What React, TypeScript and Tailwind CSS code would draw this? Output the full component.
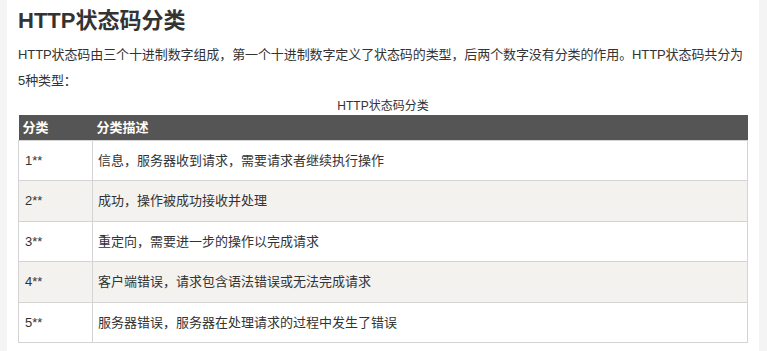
import React from 'react';

const rows = [
  { code: '1**', desc: '信息，服务器收到请求，需要请求者继续执行操作' },
  { code: '2**', desc: '成功，操作被成功接收并处理' },
  { code: '3**', desc: '重定向，需要进一步的操作以完成请求' },
  { code: '4**', desc: '客户端错误，请求包含语法错误或无法完成请求' },
  { code: '5**', desc: '服务器错误，服务器在处理请求的过程中发生了错误' },
];

const App: React.FC = () => {
  return (
    <div
      className="min-h-[351px] bg-[#f4f4f4] text-[#333]"
      style={{ fontFamily: "'Liberation Sans', 'Noto Sans CJK SC', sans-serif" }}
    >
      <div className="ml-[7px] w-[752px] min-h-[351px] bg-white px-[11px] pt-[6px]">
        <h1 className="text-[22px] font-bold leading-[30px] text-[#333]">HTTP状态码分类</h1>

        <p className="mt-[6px] text-[13px] leading-[26px] tracking-[-0.1px]">
          HTTP状态码由三个十进制数字组成，第一个十进制数字定义了状态码的类型，后两个数字没有分类的作用。HTTP状态码共分为
          <br />
          5种类型：
        </p>

        <table className="w-[730px] border-collapse text-[13px]">
          <caption className="pt-[4px] text-[12px] leading-[17px] text-[#333]">HTTP状态码分类</caption>
          <thead>
            <tr className="h-[25px] bg-[#555555] text-white">
              <th className="w-[74px] px-[4px] text-left font-bold">分类</th>
              <th className="px-[4px] text-left font-bold">分类描述</th>
            </tr>
          </thead>
          <tbody>
            {rows.map((row, i) => (
              <tr key={row.code} className={`h-[40.6px] ${i % 2 === 1 ? 'bg-[#f3f2ee]' : 'bg-white'}`}>
                <td className="border border-[#d4d4d4] px-[6px]">{row.code}</td>
                <td className="border border-[#d4d4d4] px-[5px]">{row.desc}</td>
              </tr>
            ))}
          </tbody>
        </table>
      </div>
    </div>
  );
};

export default App;
